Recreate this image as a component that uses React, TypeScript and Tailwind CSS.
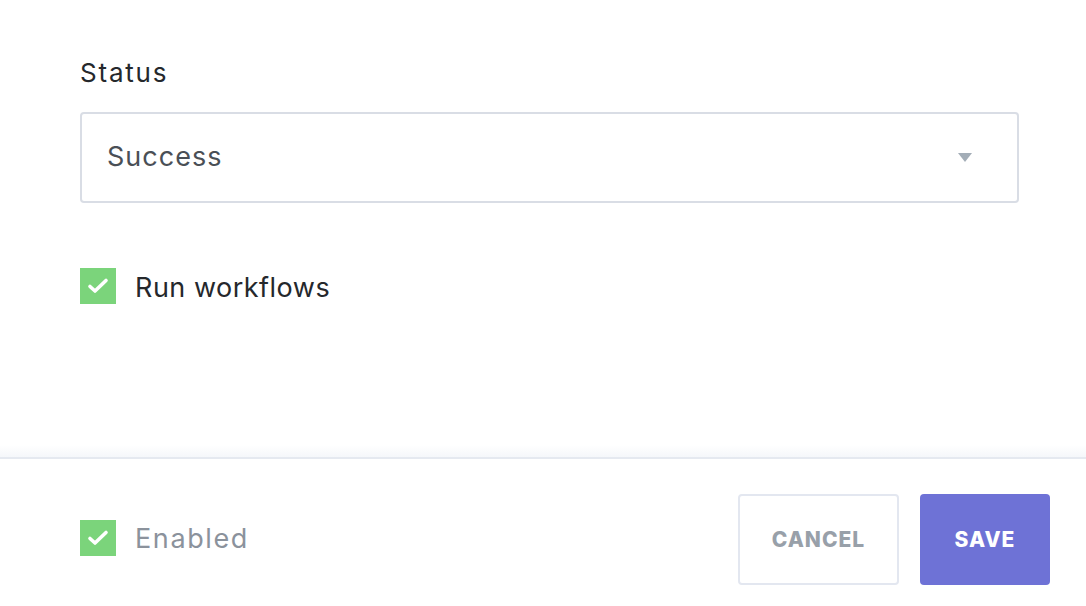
import React, { useState } from "react";

function CheckBox({ checked, onChange }: { checked: boolean; onChange: () => void }) {
  return (
    <button
      type="button"
      onClick={onChange}
      className={`mb-1 flex h-9 w-9 items-center justify-center ${checked ? "bg-[#7bd47b]" : "border-2 border-[#d4d9e2] bg-white"}`}
    >
      {checked ? (
        <svg width="24" height="24" viewBox="0 0 24 24" fill="none">
          <path d="M4 12.5l5 4.5L20 6.5" stroke="white" strokeWidth="3.6" strokeLinecap="round" strokeLinejoin="round" />
        </svg>
      ) : null}
    </button>
  );
}

export default function App() {
  const [runWorkflows, setRunWorkflows] = useState(true);
  const [enabled, setEnabled] = useState(true);

  return (
    <div className="flex h-[606px] w-[1086px] flex-col bg-white font-['Inter',sans-serif]">
      {/* Form body */}
      <div className="flex-1 px-[80px] pt-[57px]">
        <label className="block text-[26px] leading-[32px] tracking-[1.8px] text-[#25282c]">Status</label>
        <div className="mt-[23px] flex h-[91px] w-[939px] items-center justify-between rounded-[4px] border-2 border-[#d9dde5] pl-[25px] pr-[45px]">
          <span className="text-[27px] tracking-[1px] text-[#4a4f56]">Success</span>
          <svg width="14" height="9" viewBox="0 0 14 9">
            <path d="M0 0h14L7 9z" fill="#a3adb7" />
          </svg>
        </div>
        <div className="mt-[65px] flex items-center gap-[19px]">
          <CheckBox checked={runWorkflows} onChange={() => setRunWorkflows(!runWorkflows)} />
          <span className="text-[27px] tracking-[0.5px] text-[#25282c]">Run workflows</span>
        </div>
      </div>

      {/* Footer */}
      <div className="h-3 bg-gradient-to-b from-white to-[#f5f7fa]" />
      <div className="border-t-2 border-[#e5e9f0] px-[80px] pb-[21px] pt-[35px] pr-[36px]">
        <div className="flex items-center justify-between">
          <div className="flex items-center gap-[19px]">
            <CheckBox checked={enabled} onChange={() => setEnabled(!enabled)} />
            <span className="text-[27px] tracking-[1.6px] text-[#8b929c]">Enabled</span>
          </div>
          <div className="flex gap-[21px]">
            <button className="h-[91px] w-[161px] rounded-[4px] border-2 border-[#e3e7f0] bg-white text-[21px] font-extrabold tracking-[1px] text-[#98a0a9]">
              CANCEL
            </button>
            <button className="h-[91px] w-[130px] rounded-[4px] bg-[#6e72d6] text-[21px] font-extrabold tracking-[1px] text-white">
              SAVE
            </button>
          </div>
        </div>
      </div>
    </div>
  );
}
